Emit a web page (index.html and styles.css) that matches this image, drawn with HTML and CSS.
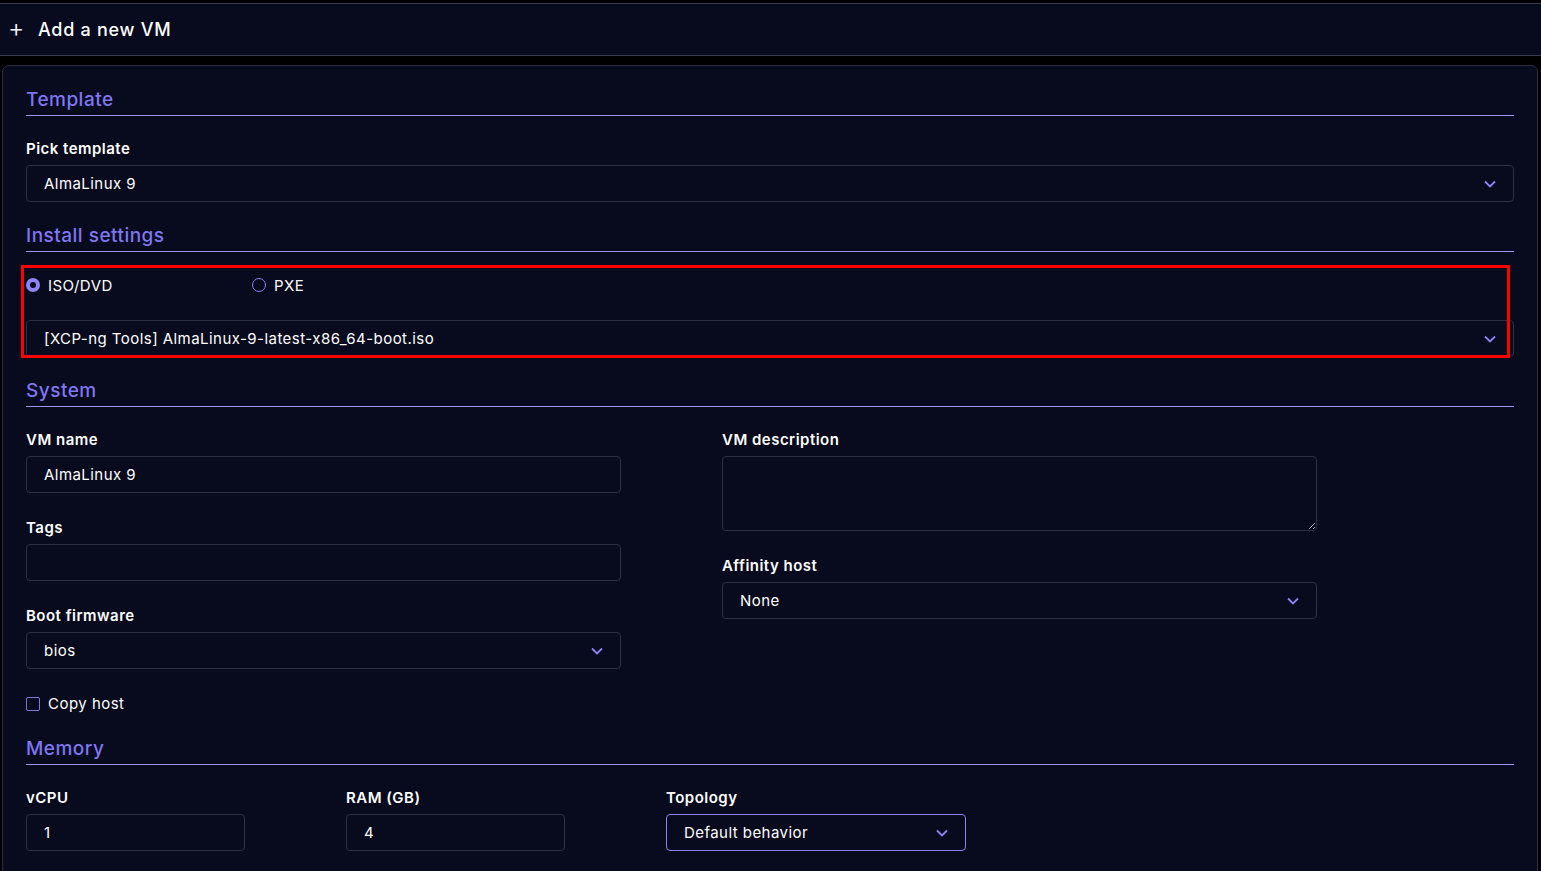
FILE: index.html
```html
<!DOCTYPE html>
<html lang="en">
<head>
  <meta charset="UTF-8" />
  <meta name="viewport" content="width=device-width, initial-scale=1.0"/>
  <title>Add a new VM</title>
  <link rel="stylesheet" href="styles.css">
</head>
<body>

  <header class="topbar">
    <span class="plus">+</span>
    <h1>Add a new VM</h1>
  </header>

  <main class="card">

    <!-- Template -->
    <section class="section">
      <h2 class="section-title">Template</h2>
      <div class="field">
        <label>Pick template</label>
        <div class="select">
          <select><option>AlmaLinux 9</option></select>
          <svg class="chevron" viewBox="0 0 12 8"><path d="M1 1.5l5 5 5-5"/></svg>
        </div>
      </div>
    </section>

    <!-- Install settings -->
    <section class="section">
      <h2 class="section-title">Install settings</h2>
      <div class="install">
        <div class="radios">
          <label class="radio"><input type="radio" name="install" checked> ISO/DVD</label>
          <label class="radio"><input type="radio" name="install"> PXE</label>
        </div>
        <div class="select">
          <select><option>[XCP-ng Tools] AlmaLinux-9-latest-x86_64-boot.iso</option></select>
          <svg class="chevron" viewBox="0 0 12 8"><path d="M1 1.5l5 5 5-5"/></svg>
        </div>
        <div class="highlight"></div>
      </div>
    </section>

    <!-- System -->
    <section class="section">
      <h2 class="section-title">System</h2>
      <div class="system-grid">
        <div class="column">
          <div class="field">
            <label>VM name</label>
            <input class="input" type="text" value="AlmaLinux 9">
          </div>
          <div class="field">
            <label>Tags</label>
            <input class="input" type="text">
          </div>
          <div class="field">
            <label>Boot firmware</label>
            <div class="select">
              <select><option>bios</option></select>
              <svg class="chevron" viewBox="0 0 12 8"><path d="M1 1.5l5 5 5-5"/></svg>
            </div>
          </div>
          <label class="checkbox"><input type="checkbox"> Copy host</label>
        </div>
        <div class="column">
          <div class="field">
            <label>VM description</label>
            <textarea class="textarea"></textarea>
          </div>
          <div class="field">
            <label>Affinity host</label>
            <div class="select">
              <select><option>None</option></select>
              <svg class="chevron" viewBox="0 0 12 8"><path d="M1 1.5l5 5 5-5"/></svg>
            </div>
          </div>
        </div>
      </div>
    </section>

    <!-- Memory -->
    <section class="section">
      <h2 class="section-title">Memory</h2>
      <div class="memory-row">
        <div class="field small">
          <label>vCPU</label>
          <input class="input" type="text" value="1">
        </div>
        <div class="field small">
          <label>RAM (GB)</label>
          <input class="input" type="text" value="4">
        </div>
        <div class="field topology">
          <label>Topology</label>
          <div class="select active">
            <select><option>Default behavior</option></select>
            <svg class="chevron" viewBox="0 0 12 8"><path d="M1 1.5l5 5 5-5"/></svg>
          </div>
        </div>
      </div>
    </section>

  </main>

</body>
</html>
```

FILE: styles.css
```css
* {
  margin: 0;
  padding: 0;
  box-sizing: border-box;
}

body {
  font-family: 'Inter', 'Noto Sans', sans-serif;
  letter-spacing: 0.03em;
  background-color: #000;
  color: #fff;
  color-scheme: dark;
  overflow: hidden;
}

.topbar {
  margin-top: 3px;
  height: 53px;
  background-color: #080a1e;
  border-top: 1px solid #3a3b4a;
  border-bottom: 1px solid #3a3b4a;
  display: flex;
  align-items: center;
  padding-left: 8px;
}

.plus {
  font-size: 25px;
  font-weight: 300;
  width: 30px;
  line-height: 1;
  margin-bottom: 2px;
}

.topbar h1 {
  font-size: 18px;
  font-weight: 500;
  letter-spacing: 0.04em;
  margin-bottom: 1px;
}

.card {
  margin: 9px 3px 0 2px;
  background-color: #080a1e;
  border: 1px solid #2c2d40;
  border-radius: 7px 7px 0 0;
  padding: 19px 23px 40px 23px;
  min-height: 820px;
}

.section {
  margin-bottom: 19px;
}

.section-title {
  font-size: 19px;
  font-weight: 500;
  line-height: 29px;
  color: #7f76f3;
  padding-bottom: 1px;
  border-bottom: 1px solid #9f97f6;
  margin-bottom: 22px;
}

.field {
  display: flex;
  flex-direction: column;
}

.field label {
  font-size: 15px;
  font-weight: 600;
  line-height: 22px;
  margin-bottom: 5px;
}

.select {
  display: flex;
  align-items: center;
  height: 37px;
  border: 1px solid #2e2f44;
  border-radius: 4px;
  padding-right: 17px;
}

.select.active {
  border-color: #8c83f6;
}

.select select {
  flex: 1;
  appearance: none;
  background: transparent;
  border: none;
  color: #fff;
  font-family: inherit;
  font-size: 15px;
  letter-spacing: 0.03em;
  padding-left: 17px;
  height: 100%;
  outline: none;
}

.chevron {
  width: 12px;
  height: 8px;
  fill: none;
  stroke: #8c83f6;
  stroke-width: 1.8;
}

.input,
.textarea {
  height: 37px;
  background: transparent;
  border: 1px solid #2e2f44;
  border-radius: 4px;
  color: #fff;
  font-family: inherit;
  font-size: 15px;
  letter-spacing: 0.03em;
  padding: 0 17px;
  outline: none;
}

.textarea {
  height: 75px;
  resize: vertical;
}

/* install source */

.install {
  position: relative;
}

.radios {
  display: flex;
  height: 22px;
  align-items: center;
  margin-bottom: 24px;
}

.radio {
  width: 226px;
  display: flex;
  align-items: center;
  gap: 8px;
  font-size: 15px;
}

.radio input,
.checkbox input {
  appearance: none;
  width: 14px;
  height: 14px;
  border: 1.5px solid #8c83f6;
  border-radius: 50%;
  margin: 0;
}

.radio input:checked {
  border-width: 4.5px;
  background: #080a1e;
}

.highlight {
  position: absolute;
  top: -9px;
  left: -5px;
  right: 4px;
  bottom: -1px;
  border: 3px solid #ff0000;
  pointer-events: none;
}

/* system */

.system-grid {
  display: grid;
  grid-template-columns: 595px 595px;
  column-gap: 101px;
}

.column {
  display: flex;
  flex-direction: column;
  gap: 24px;
}

.checkbox {
  display: flex;
  align-items: center;
  gap: 8px;
  font-size: 15px;
  line-height: 22px;
}

.checkbox input {
  border-radius: 2px;
  border: 1px solid #7f76e0;
}

/* memory */

.memory-row {
  display: flex;
  gap: 101px;
}

.field.small {
  width: 219px;
}

.field.topology {
  width: 300px;
}
```
